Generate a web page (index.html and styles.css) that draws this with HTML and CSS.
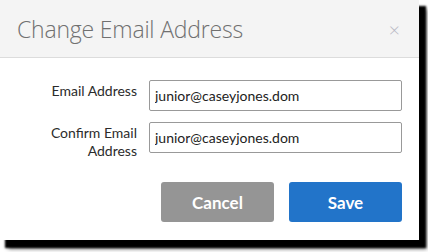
FILE: index.html
```html
<!DOCTYPE html>
<html lang="en">
<head>
    <meta charset="UTF-8">
    <title>Change Email Address</title>
    <link rel="stylesheet" href="styles.css">
</head>
<body>

    <div class="dialog">
        <div class="dialog-header">
            <h2>Change Email Address</h2>
            <span class="close">&times;</span>
        </div>
        <form class="dialog-body">
            <div class="row">
                <label for="email">Email Address</label>
                <input type="email" id="email" value="junior@caseyjones.dom">
            </div>
            <div class="row">
                <label for="confirmEmail">Confirm Email Address</label>
                <input type="email" id="confirmEmail" value="junior@caseyjones.dom">
            </div>
            <div class="actions">
                <button type="button" class="btn cancel">Cancel</button>
                <button type="submit" class="btn save">Save</button>
            </div>
        </form>
    </div>

</body>
</html>
```

FILE: styles.css
```css
body {
    margin: 0;
    width: 428px;
    height: 252px;
    background-color: white;
    font-family: Lato, Arial, sans-serif;
}

.dialog {
    width: 419px;
    height: 240px;
    background-color: white;
    box-shadow: 6px 7px 2px 1px #000, 8px 9px 4px rgba(0, 0, 0, 0.5);
}

.dialog-header {
    height: 57px;
    background-color: #f4f4f4;
    border-bottom: 1px solid #dcdcdc;
    display: flex;
    align-items: center;
    justify-content: space-between;
    padding: 0 19px 0 17px;
}

.dialog-header h2 {
    margin: 0;
    font-family: "Open Sans", Arial, sans-serif;
    font-size: 23px;
    font-weight: 300;
    color: #707070;
    letter-spacing: -0.2px;
}

.dialog-header .close {
    font-size: 20px;
    font-weight: 300;
    color: #b8b8c4;
    line-height: 1;
}

.dialog-body {
    padding: 22px 17px 0 0;
}

.row {
    display: flex;
    align-items: flex-start;
    margin-bottom: 11px;
}

.row label {
    width: 137px;
    margin-right: 12px;
    text-align: right;
    font-size: 14px;
    line-height: 18px;
    color: #2b2b2b;
    padding-top: 2px;
}

.row input {
    width: 253px;
    height: 31px;
    box-sizing: border-box;
    border: 1px solid #999;
    border-radius: 2px;
    padding: 0 5px;
    font-family: Lato, Arial, sans-serif;
    font-size: 14px;
    color: #222;
}

.actions {
    display: flex;
    justify-content: flex-end;
    gap: 15px;
    margin-top: 22px;
}

.btn {
    width: 113px;
    height: 40px;
    border: none;
    border-radius: 3px;
    color: white;
    font-family: Lato, Arial, sans-serif;
    font-size: 17px;
    font-weight: 700;
    cursor: pointer;
}

.btn.cancel {
    background-color: #959595;
}

.btn.save {
    background-color: #2274c9;
}
```
